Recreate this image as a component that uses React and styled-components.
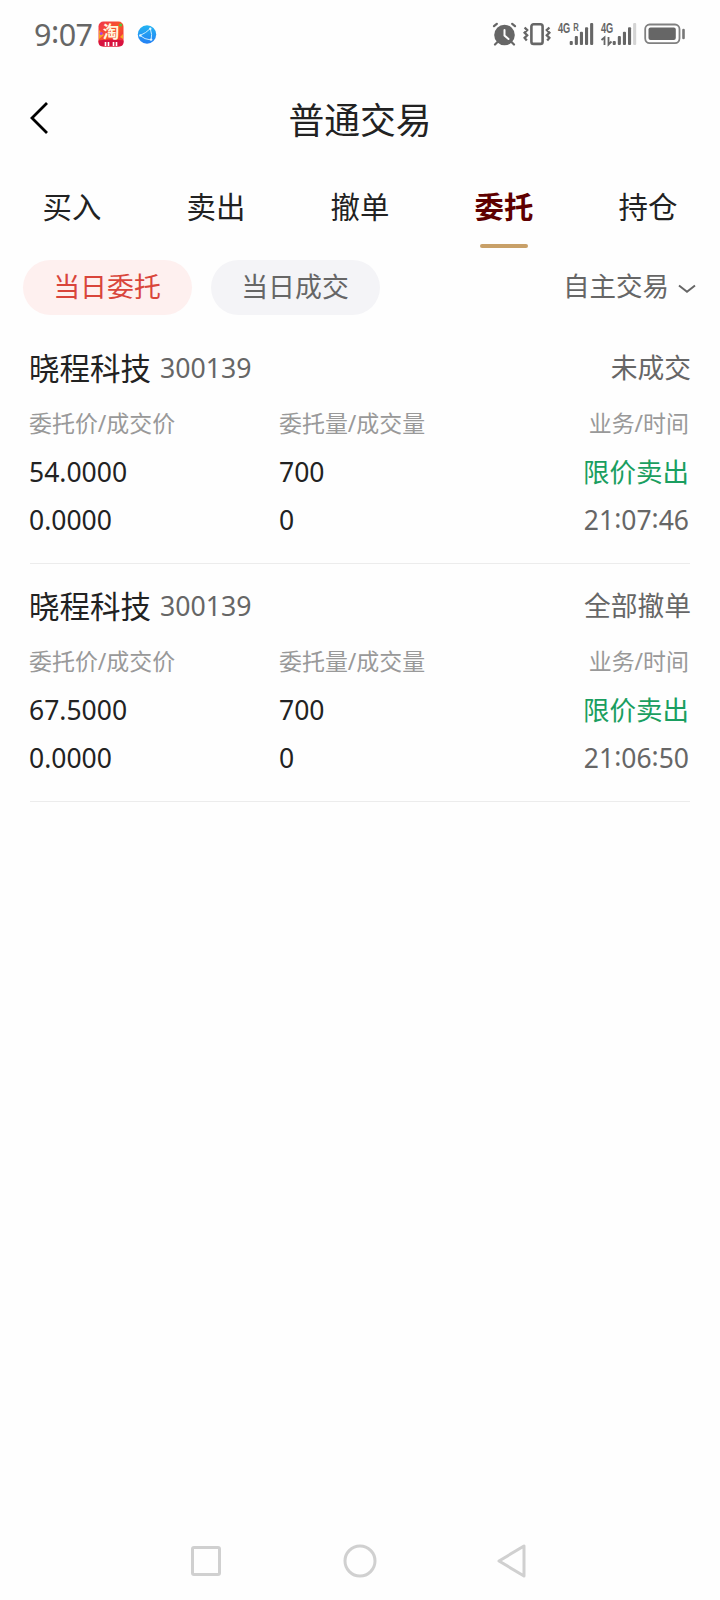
import React from "react";
import styled, { createGlobalStyle } from "styled-components";

const Global = createGlobalStyle`
  * { box-sizing: border-box; }
  body {
    margin: 0;
    background: #fefefe;
    color: #222;
    font-family: "Noto Sans", "Noto Sans CJK SC", sans-serif;
  }
  svg { display: block; flex: none; overflow: visible; }
`;

const Screen = styled.div`
  width: 720px;
  height: 1600px;
  display: flex;
  flex-direction: column;
  background: #fefefe;
  overflow: hidden;
`;

const StatusBar = styled.header`
  height: 68px;
  padding: 0 34px;
  display: flex;
  align-items: center;
  color: #666;
`;

const Clock = styled.div`
  width: 64px;
  font-size: 30.5px;
  letter-spacing: -0.5px;
  line-height: 68px;
  white-space: nowrap;
`;

const Colon = styled.span`
  vertical-align: 0.09em;
  line-height: 0;
`;

const Notifications = styled.div`
  display: flex;
  align-items: center;
  gap: 13px;
  flex: 1;
`;

const Indicators = styled.div`
  display: flex;
  align-items: center;
`;

const TitleBar = styled.div`
  height: 102px;
  display: grid;
  grid-template-columns: 120px 1fr 120px;
  align-items: center;
`;

const BackButton = styled.button`
  border: 0;
  background: none;
  padding: 0 0 4px 29px;
  height: 48px;
  display: flex;
  align-items: center;
`;

const Title = styled.h1`
  margin: 0;
  text-align: center;
  font-size: 35.8px;
  font-weight: 400;
  line-height: 104px;
`;

const Tabs = styled.nav`
  display: grid;
  grid-template-columns: repeat(5, 1fr);
  height: 78px;
`;

const Tab = styled.div`
  display: flex;
  flex-direction: column;
  align-items: center;
  font-size: 29.4px;
  line-height: 74px;
  font-weight: ${(p) => (p.$active ? 700 : 400)};
  color: ${(p) => (p.$active ? "#5f0000" : "#222")};
  &::after {
    content: "";
    width: 48px;
    height: 4px;
    border-radius: 2px;
    background: ${(p) => (p.$active ? "#c8a068" : "transparent")};
  }
`;

const Filters = styled.div`
  height: 78px;
  padding: 12px 24px 0 23px;
  display: flex;
  align-items: flex-start;
  gap: 19px;
`;

const Chip = styled.button`
  width: 169px;
  height: 55px;
  padding: 0 1px 2px 0;
  border: 0;
  border-radius: 28px;
  font: inherit;
  font-size: 26.9px;
  line-height: 53px;
  color: ${(p) => (p.$active ? "#d9453b" : "#666")};
  background: ${(p) => (p.$active ? "#fef0ef" : "#f4f4f7")};
`;

const Dropdown = styled.div`
  margin-left: auto;
  display: flex;
  align-items: center;
  gap: 9px;
  color: #666;
  font-size: 26.5px;
  line-height: 53px;
`;

const Chevron = styled.svg`
  margin-top: 4px;
`;

const Order = styled.article`
  height: 238px;
  margin: 0 30px;
  padding-top: 16px;
  border-bottom: 1px solid #ececec;
`;

const OrderHead = styled.div`
  display: flex;
  align-items: center;
  height: 52px;
  margin: 0 -1px 5px;
  line-height: 50px;
`;

const Name = styled.span`
  font-size: 30.5px;
`;

const Code = styled.span`
  margin-left: 9px;
  font-size: 26.67px;
  line-height: 52px;
  color: #666;
`;

const State = styled.span`
  margin-left: auto;
  font-size: 26.75px;
  color: #666;
`;

const Fields = styled.div`
  display: grid;
  grid-template-columns: 250px 1fr auto;
  grid-template-rows: 49px 48px 48px;
  margin: 0 1px 0 -1px;
`;

const Cell = styled.span`
  font-size: ${(p) => (p.$label ? "22.95px" : "26.5px")};
  line-height: 48px;
  text-align: ${(p) => (p.$end ? "right" : "left")};
  color: ${(p) => p.$color || (p.$label ? "#999" : "#222")};
`;

const SystemNav = styled.footer`
  height: 78px;
  margin-top: auto;
  padding: 0 191px 0 190px;
  display: flex;
  align-items: center;
  justify-content: space-between;
`;

const Time = ({ value }) =>
  value.split(":").map((part, i) => (
    <React.Fragment key={i}>
      {i > 0 && <Colon>:</Colon>}
      {part}
    </React.Fragment>
  ));

const TaobaoIcon = () => (
  <svg width="26" height="26" viewBox="0 0 26 26">
    <defs>
      <linearGradient id="tb" x1="0" y1="0" x2="1" y2="1">
        <stop offset="0" stopColor="#f0344b" />
        <stop offset=".5" stopColor="#f9552b" />
        <stop offset="1" stopColor="#ee2440" />
      </linearGradient>
    </defs>
    <rect x=".5" y=".5" width="25" height="25" rx="5" fill="url(#tb)" />
    <path d="M1 9l5 5-5 4zM22 16l3-3v5z" fill="#f5a623" />
    <circle cx="3.2" cy="12.5" r="1.5" fill="#b13fe0" />
    <circle cx="22.6" cy="4" r="1.6" fill="#58c43a" />
    <path d="M.5 19.5q12.500-2 25 0V21q0 4.500-5 4.500h-15q-5 0-5-4.500z" fill="#d8123f" />
    <text x="13" y="16.500" textAnchor="middle" fontSize="16.500" fontWeight="700" fill="#fff6df" fontFamily="Noto Sans CJK SC">淘</text>
    <path d="M7.500 21v4M10.500 21v4M15.500 21v4M18.500 21v4" stroke="#fff" strokeWidth="1.600" />
  </svg>
);

const GlobeIcon = () => (
  <svg width="19" height="19" viewBox="0 0 19 19">
    <defs>
      <linearGradient id="gl" x1="0" y1="0" x2="0" y2="1">
        <stop offset="0" stopColor="#22b4f2" />
        <stop offset="1" stopColor="#2480f4" />
      </linearGradient>
    </defs>
    <circle cx="10" cy="9.500" r="9.200" fill="url(#gl)" />
    <path d="M3 10.500Q9 8 13.300 3.600M13.300 3.600Q15.500 9.500 14.100 15M14.100 15Q7.500 14.500 3 10.500" fill="none" stroke="#c9ecff" strokeWidth="1" />
    <circle cx="13.300" cy="3.800" r="1.200" fill="#e4f6ff" />
    <circle cx="14.100" cy="14.600" r="1.200" fill="#e4f6ff" />
    <circle cx="3.300" cy="10.400" r="1.200" fill="#e4f6ff" />
  </svg>
);

const AlarmIcon = () => (
  <svg width="24" height="24" viewBox="0 0 24 24" fill="none" stroke="#666" strokeLinecap="round">
    <circle cx="12.500" cy="13" r="10.300" fill="#666" stroke="none" />
    <path d="M2 4.200L4.800 1.800M23 4.200L20.200 1.800M5.500 20l-2.500 2.500M19.500 20l2.500 2.500" strokeWidth="2.200" />
    <path d="M12.500 8v5.500l4 3.500" stroke="#fefefe" strokeWidth="2" />
  </svg>
);

const VibrateIcon = () => (
  <svg width="28" height="24" viewBox="0 0 28 24" fill="none" stroke="#666">
    <rect x="8.400" y="2.300" width="11.200" height="19.600" rx="2.200" strokeWidth="2.600" />
    <path d="M1.600 5.500l2.600 2.600-2.600 2.600 2.600 2.600-2.600 2.600 2.200 2.600M26.400 5.500l-2.600 2.600 2.600 2.600-2.600 2.600 2.600 2.600-2.200 2.600" strokeWidth="2.300" />
  </svg>
);

const bars = [
  [18.500, 4],
  [13.500, 9],
  [9.200, 13.300],
  [4.800, 17.700],
  [0.500, 22],
];

const SignalIcon = ({ roaming, left, weak }) => (
  <svg width="36" height="24" viewBox="0 0 36 24" fill="#666">
    {bars.map(([y, h], i) => (
      <rect key={i} x={left + i * 5.1} y={y + 0.5} width="3.100" height={h} rx="1" fill={weak && i === 4 ? "#d4d4d4" : "#666"} />
    ))}
    <text x="0" y="11.200" fontSize="14" fontWeight="700" fontFamily="Liberation Sans Narrow, Liberation Sans" textLength="12.300" lengthAdjust="spacingAndGlyphs">4G</text>
    {roaming ? (
      <text x="15.300" y="9" fontSize="11" fontWeight="700" fontFamily="Liberation Sans" textLength="5.500" lengthAdjust="spacingAndGlyphs">R</text>
    ) : (
      <path d="M.5 18l3-2.500V23M7.500 15v7.500l3-3" fill="none" stroke="#666" strokeWidth="1.800" />
    )}
  </svg>
);

const BatteryIcon = () => (
  <svg width="42" height="22" viewBox="0 0 42 22">
    <rect x="1.200" y="1.500" width="34.300" height="18.600" rx="4.500" fill="none" stroke="#808080" strokeWidth="1.800" />
    <rect x="4.500" y="4.500" width="27.300" height="12.600" rx="2" fill="#666" />
    <rect x="38.200" y="5.800" width="2.600" height="10.500" rx="1.300" fill="#777" />
  </svg>
);

const Gap = styled.i`
  width: ${(p) => p.$w}px;
`;

const orders = [
  { state: "未成交", price: "54.0000", time: "21:07:46" },
  { state: "全部撤单", price: "67.5000", time: "21:06:50" },
];

export default function App() {
  return (
    <Screen>
      <Global />
      <StatusBar>
        <Clock><Time value="9:07" /></Clock>
        <Notifications>
          <TaobaoIcon />
          <GlobeIcon />
        </Notifications>
        <Indicators>
          <AlarmIcon />
          <Gap $w={7} />
          <VibrateIcon />
          <Gap $w={7} />
          <SignalIcon roaming left={11.7} />
          <Gap $w={7} />
          <SignalIcon left={11.7} weak />
          <Gap $w={7} />
          <BatteryIcon />
        </Indicators>
      </StatusBar>
      <TitleBar>
        <BackButton aria-label="返回">
          <svg width="20" height="34" viewBox="0 0 20 34" fill="none" stroke="#000" strokeWidth="2.800">
            <path d="M18 2L3 17l15 15" />
          </svg>
        </BackButton>
        <Title>普通交易</Title>
      </TitleBar>
      <Tabs>
        {["买入", "卖出", "撤单", "委托", "持仓"].map((t) => (
          <Tab key={t} $active={t === "委托"}>{t}</Tab>
        ))}
      </Tabs>
      <Filters>
        <Chip $active>当日委托</Chip>
        <Chip>当日成交</Chip>
        <Dropdown>
          自主交易
          <Chevron width="18" height="10" viewBox="0 0 18 10" fill="none" stroke="#666" strokeWidth="2">
            <path d="M1 1.500l8 6.200 8-6.200" />
          </Chevron>
        </Dropdown>
      </Filters>
      {orders.map((o) => (
        <Order key={o.time}>
          <OrderHead>
            <Name>晓程科技</Name>
            <Code>300139</Code>
            <State>{o.state}</State>
          </OrderHead>
          <Fields>
            <Cell $label>委托价/成交价</Cell>
            <Cell $label>委托量/成交量</Cell>
            <Cell $label $end>业务/时间</Cell>
            <Cell>{o.price}</Cell>
            <Cell>700</Cell>
            <Cell $end $color="#1a9e60">限价卖出</Cell>
            <Cell>0.0000</Cell>
            <Cell>0</Cell>
            <Cell $end $color="#666"><Time value={o.time} /></Cell>
          </Fields>
        </Order>
      ))}
      <SystemNav>
        <svg width="32" height="32" viewBox="0 0 32 32" fill="none" stroke="#d0d0d0" strokeWidth="3">
          <rect x="2.500" y="2.500" width="27" height="27" rx="1.500" />
        </svg>
        <svg width="34" height="34" viewBox="0 0 34 34" fill="none" stroke="#d0d0d0" strokeWidth="3">
          <circle cx="17" cy="17" r="15" />
        </svg>
        <svg width="32" height="34" viewBox="0 0 32 34" fill="none" stroke="#d0d0d0" strokeWidth="3" strokeLinejoin="round">
          <path d="M27 2v30L2 17z" />
        </svg>
      </SystemNav>
    </Screen>
  );
}
